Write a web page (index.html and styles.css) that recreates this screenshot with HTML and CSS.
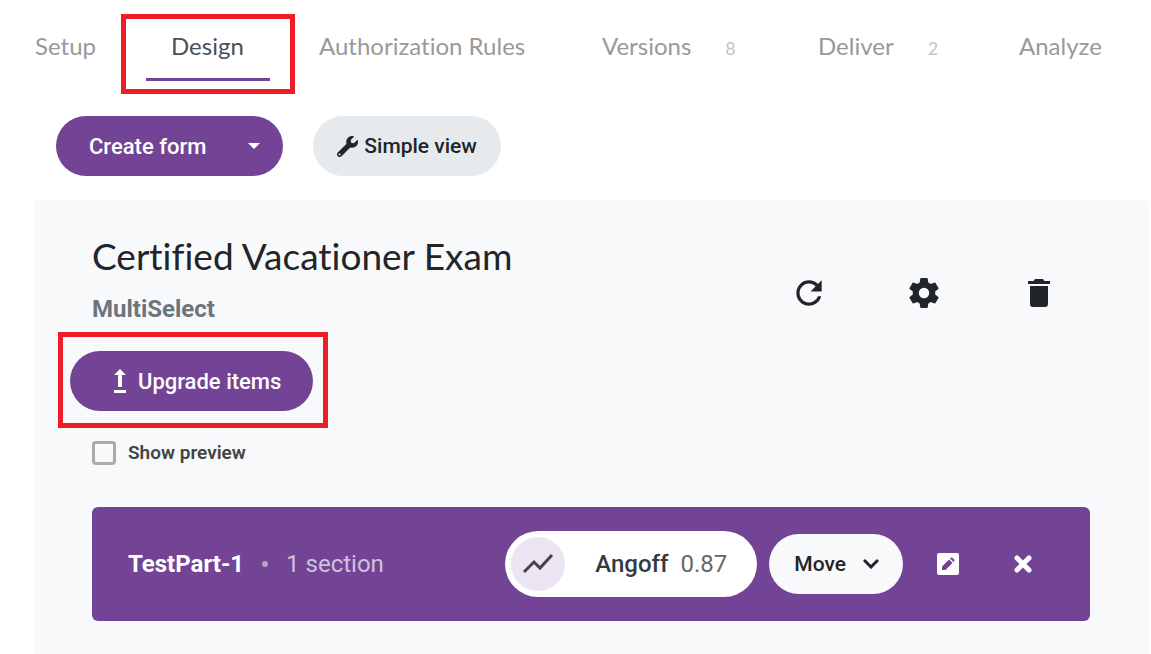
FILE: index.html
```html
<!DOCTYPE html>
<html lang="en">
<head>
<meta charset="utf-8">
<title>Certified Vacationer Exam</title>
<link rel="stylesheet" href="styles.css">
</head>
<body>
<nav class="tabs">
  <a class="tab" href="#setup">Setup</a>
  <a class="tab tab-active" href="#design" aria-current="page"><span class="tab-label">Design</span></a>
  <a class="tab" href="#rules">Authorization Rules</a>
  <a class="tab" href="#versions">Versions <span class="count">8</span></a>
  <a class="tab" href="#deliver">Deliver <span class="count">2</span></a>
  <a class="tab" href="#analyze">Analyze</a>
</nav>
<div class="toolbar">
  <div class="split">
    <button class="split-main" type="button">Create form</button>
    <button class="split-toggle" type="button" aria-label="More create options"><svg width="12" height="6" viewBox="0 0 12 6"><path d="M0 0h12L6 6z" fill="currentColor"/></svg></button>
  </div>
  <button class="btn btn-light" type="button"><svg width="21" height="21" viewBox="0 0 512 512"><path fill="currentColor" d="M507.7 109.1c-2.2-9-13.5-12.1-20.1-5.5l-74.4 74.4-67.900-11.300L334 98.900l74.400-74.400c6.600-6.600 3.400-17.900-5.700-20.200-47.400-11.700-99.600.9-136.600 37.900-39.600 39.600-50.500 97.100-34.100 147.200L18.700 402.800c-25 25-25 65.500 0 90.500s65.500 25 90.500 0l213.200-213.200c50.100 16.700 107.500 5.700 147.400-34.200 37.100-37.100 49.700-89.300 37.900-136.800zM64 472c-13.200 0-24-10.800-24-24 0-13.300 10.700-24 24-24s24 10.700 24 24c0 13.200-10.700 24-24 24z"/></svg>Simple view</button>
</div>
<main class="card">
  <header class="card-head">
    <div>
      <h1 class="title">Certified Vacationer Exam</h1>
      <p class="subtitle">MultiSelect</p>
    </div>
    <div class="head-actions">
      <button class="icon-btn" type="button" aria-label="Refresh"><svg width="38" height="38" viewBox="0 0 24 24"><path fill="currentColor" d="M17.650 6.350A7.960 7.960 0 0 0 12 4a8 8 0 1 0 7.730 10h-2.080A6 6 0 1 1 12 6c1.660 0 3.140.69 4.220 1.780L13 11h7V4z"/></svg></button>
      <button class="icon-btn" type="button" aria-label="Settings"><svg width="36" height="36" viewBox="0 0 24 24"><path fill="currentColor" d="M19.430 12.980c.04-.32.07-.64.07-.98s-.03-.66-.07-.98l2.110-1.650c.19-.15.24-.42.12-.64l-2-3.460c-.12-.22-.39-.3-.61-.22l-2.490 1c-.52-.4-1.080-.73-1.690-.98l-.38-2.650A.49.49 0 0 0 14 2h-4c-.25 0-.46.18-.49.42l-.38 2.650c-.61.25-1.170.59-1.690.98l-2.490-1c-.23-.09-.49 0-.61.22l-2 3.460c-.13.22-.07.49.12.64l2.110 1.650c-.04.32-.07.65-.07.98s.03.66.07.98l-2.110 1.650c-.19.15-.24.42-.12.64l2 3.460c.12.22.39.3.61.22l2.490-1c.52.4 1.080.73 1.690.98l.38 2.650c.03.24.24.42.49.42h4c.25 0 .46-.18.49-.42l.38-2.650c.61-.25 1.170-.59 1.690-.98l2.490 1c.23.09.49 0 .61-.22l2-3.460c.12-.22.07-.49-.12-.64zM12 15.500a3.500 3.500 0 1 1 0-7 3.500 3.500 0 0 1 0 7z"/></svg></button>
      <button class="icon-btn" type="button" aria-label="Delete"><svg width="22" height="28" viewBox="0 0 22 28"><path fill="currentColor" d="M7 0h8l1.500 2H22v3H0V2h5.500zM2 7h18v18a3 3 0 0 1-3 3H5a3 3 0 0 1-3-3z"/></svg></button>
    </div>
  </header>
  <div class="card-body">
    <div class="upgrade">
      <button class="btn btn-primary" type="button"><svg width="12" height="24" viewBox="0 0 12 24"><path fill="currentColor" d="M6 0l6 6H8v12H4V6H0zM0 21h12v3H0z"/></svg>Upgrade items</button>
    </div>
    <label class="preview"><input class="check" type="checkbox">Show preview</label>
    <section class="part">
      <h2 class="part-name">TestPart-1</h2>
      <span class="dot"></span>
      <span class="part-meta">1 section</span>
      <button class="score" type="button">
        <span class="score-icon"><svg width="32" height="22" viewBox="0 0 32 22"><path fill="none" stroke="currentColor" stroke-width="3" d="M2 19L12 9l6 6L30 2"/></svg></span>
        <span>Angoff</span>
        <span class="score-value">0.87</span>
      </button>
      <button class="btn btn-move" type="button">Move<svg width="16" height="10" viewBox="0 0 16 10"><path fill="none" stroke="currentColor" stroke-width="3" d="M1 1l7 7 7-7"/></svg></button>
      <div class="part-actions">
        <button class="part-btn" type="button" aria-label="Edit"><svg width="22" height="22" viewBox="0 0 22 22"><rect width="22" height="22" rx="2" fill="currentColor"/><path fill="#734496" d="M5 17v-3.500l7-7 3.500 3.500L8.500 17zM13 5.500l1-.8c.5-.4 1-.3 1.400.1l1.800 1.800c.4.4.4.9 0 1.400l-.8.900z"/></svg></button>
        <button class="part-btn" type="button" aria-label="Remove"><svg width="18" height="18" viewBox="0 0 18 18"><path fill="none" stroke="currentColor" stroke-width="5" stroke-linecap="round" d="M3 3l12 12M15 3L3 15"/></svg></button>
      </div>
    </section>
  </div>
</main>
</body>
</html>
```
FILE: styles.css
```css
* {
  box-sizing: border-box;
}

body {
  margin: 0;
  min-height: 100vh;
  display: flex;
  flex-direction: column;
  background: #fff;
  color: #212529;
  font-family: Roboto, "Liberation Sans", sans-serif;
}

button {
  font: inherit;
  font-weight: 500;
  color: inherit;
  border: 0;
  padding: 0;
  background: none;
  cursor: pointer;
}

svg {
  display: block;
  flex: none;
}

.tabs {
  display: grid;
  grid-template-columns: 86fr 198fr 283fr 216fr 201fr 85fr;
  align-items: start;
  padding: 14px 47px 22px 35px;
  font-family: Lato, "Open Sans", sans-serif;
  font-size: 24px;
  font-variant-ligatures: none;
  line-height: 32px;
}

.tab {
  display: flex;
  align-items: center;
  gap: 34px;
  padding-top: 16px;
  color: #999;
  text-decoration: none;
  white-space: nowrap;
}

.tab-active {
  justify-self: start;
  padding: 11px 20px 8px;
  border: 5px solid #ee1c25;
  color: #495057;
}

.tab-label {
  padding: 0 26px 16px 25px;
  border-bottom: 3px solid #734496;
}

.count {
  padding-top: 4px;
  color: #c4c4c4;
  font-size: 18px;
  line-height: 28px;
}

.toolbar {
  display: flex;
  gap: 30px;
  padding: 0 56px 24px;
  font-size: 22px;
}

.split {
  display: flex;
  height: 60px;
  border-radius: 30px;
  background: #734496;
  color: #fff;
}

.split-main {
  padding: 0 31px 0 33px;
}

.split-toggle {
  display: flex;
  align-items: center;
  padding: 0 23px 0 11px;
}

.btn {
  display: flex;
  align-items: center;
  height: 60px;
  border-radius: 30px;
  white-space: nowrap;
}

.btn-light {
  gap: 6px;
  padding: 0 24px;
  background: #e6eaed;
  font-size: 21px;
}

.btn-primary {
  gap: 12px;
  padding: 0 32px 0 44px;
  background: #734496;
  color: #fff;
}

.card {
  flex: 1;
  margin: 0 2px 0 34px;
  padding-bottom: 33px;
  border-radius: 6px 6px 0 0;
  background: #f8f9fb;
}

.card-head {
  display: flex;
  justify-content: space-between;
  align-items: center;
  padding: 31px 53px 0 58px;
}

.title {
  margin: 0;
  font-family: Lato, "Open Sans", sans-serif;
  font-size: 37px;
  font-variant-ligatures: none;
  font-weight: 400;
  line-height: 50px;
}

.subtitle {
  margin: 9px 0 0;
  color: #6c757d;
  font-size: 24px;
  font-weight: 700;
  line-height: 38px;
}

.head-actions {
  display: flex;
  padding-top: 26px;
}

.icon-btn {
  display: grid;
  place-items: center;
  width: 115px;
  height: 40px;
}

.card-body {
  padding: 4px 59px 0 24px;
}

.upgrade {
  width: fit-content;
  padding: 14px 10px 12px 7px;
  border: 5px solid #ee1c25;
  font-size: 22px;
}

.preview {
  display: flex;
  align-items: center;
  gap: 12px;
  width: fit-content;
  margin: 12px 0 0 34px;
  color: #444;
  font-size: 19px;
  font-weight: 600;
  line-height: 26px;
}

.check {
  appearance: none;
  width: 24px;
  height: 24px;
  margin: 0;
  border: 3px solid #aaa;
  border-radius: 4px;
}

.check:checked {
  background: #734496;
}

.part {
  display: flex;
  align-items: center;
  margin: 41px 0 0 34px;
  padding: 24px 30px 24px 36px;
  border-radius: 6px;
  background: #734496;
  color: #fff;
  font-size: 24px;
}

.part-name {
  margin: 0;
  font-size: 24px;
  font-weight: 700;
}

.dot {
  width: 6px;
  height: 6px;
  margin: 0 18px;
  border-radius: 50%;
  background: #b9a1ca;
}

.part-meta {
  color: #d0c0dc;
}

.score {
  display: flex;
  align-items: center;
  gap: 12px;
  height: 66px;
  margin-left: auto;
  padding: 0 30px 0 6px;
  border-radius: 33px;
  background: #fff;
  color: #343a40;
}

.score-icon {
  display: grid;
  place-items: center;
  width: 54px;
  height: 54px;
  margin-right: 18px;
  border-radius: 50%;
  background: #ece4f3;
  color: #444;
}

.score-value {
  color: #666;
  font-weight: 400;
}

.btn-move {
  gap: 17px;
  margin-left: 12px;
  padding: 0 24px 0 25px;
  background: #f8f9fb;
  color: #212529;
  font-size: 21px;
}

.part-actions {
  display: flex;
  margin-left: 7px;
}

.part-btn {
  display: grid;
  place-items: center;
  width: 75px;
  height: 60px;
}
```
